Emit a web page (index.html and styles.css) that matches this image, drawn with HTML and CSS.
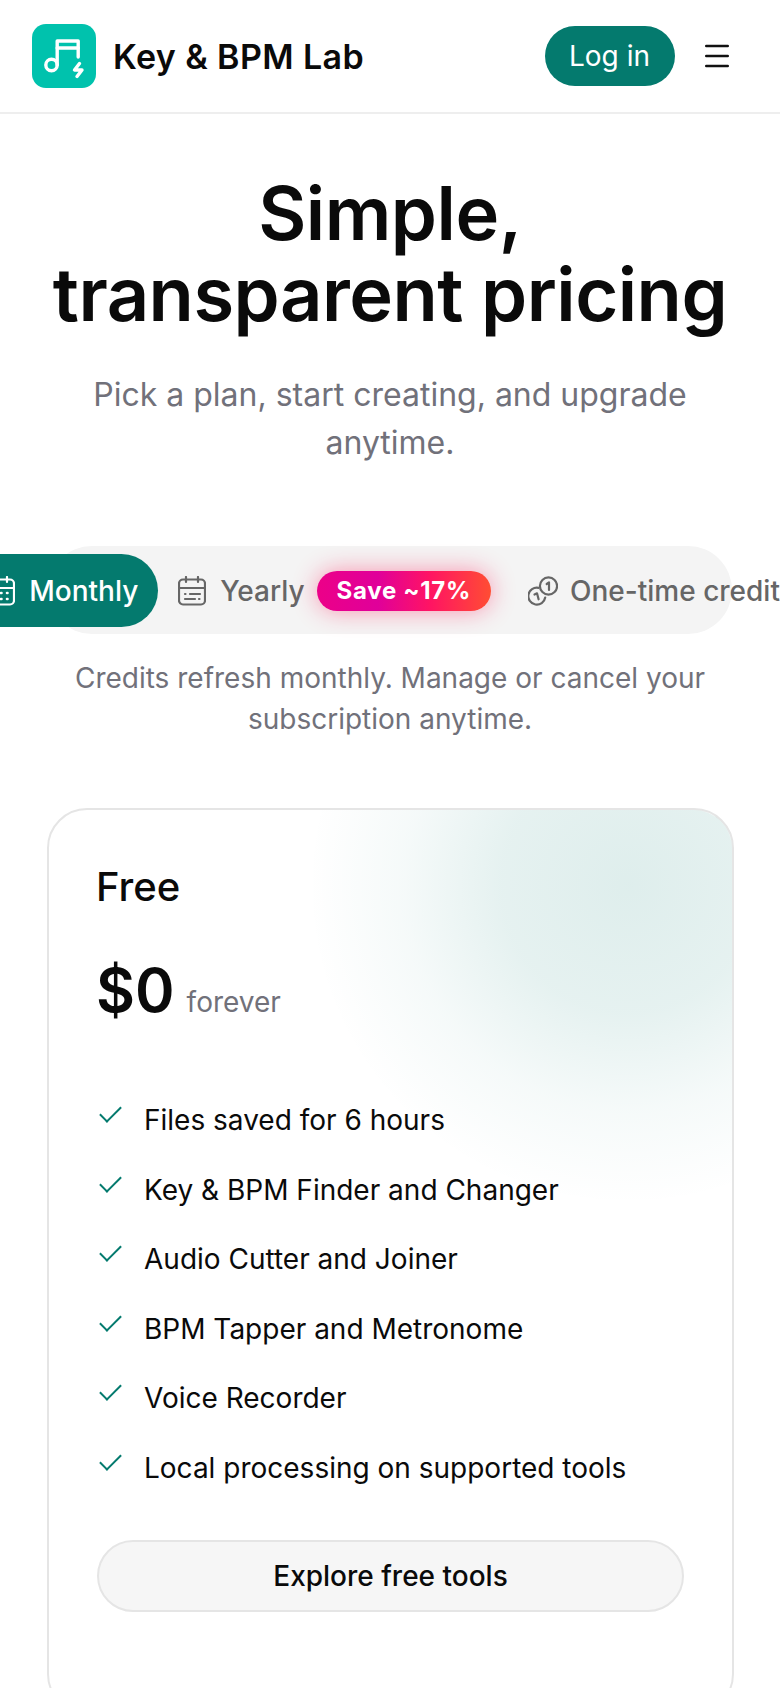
FILE: index.html
```html
<!DOCTYPE html>
<html lang="en">
<head>
    <meta charset="UTF-8">
    <meta name="viewport" content="width=device-width, initial-scale=1.0">
    <title>Pricing - Key &amp; BPM Lab</title>
    <link rel="stylesheet" href="styles.css">
</head>
<body>
    <header class="topbar">
        <a class="brand" href="#">
            <span class="brand-logo">
                <svg viewBox="0 0 64 64" width="64" height="64" fill="none" stroke="#fff" stroke-width="3.4" stroke-linecap="round" stroke-linejoin="round">
                    <circle cx="19.5" cy="41" r="5.7"/>
                    <path d="M25.2 41V17h21v16"/>
                    <path d="M25.2 24h21"/>
                    <path d="M47.5 39.5l-5 6.5h7.5l-5 6.5"/>
                </svg>
            </span>
            <span class="brand-name">Key &amp; BPM Lab</span>
        </a>
        <div class="topbar-right">
            <a class="login" href="#">Log in</a>
            <button class="menu" aria-label="Menu">
                <svg viewBox="0 0 24 24" width="24" height="24" fill="none" stroke="#111" stroke-width="2.4" stroke-linecap="round">
                    <path d="M1.2 2h21.6M1.2 12h21.6M1.2 22h21.6"/>
                </svg>
            </button>
        </div>
    </header>

    <main class="page">
        <section class="hero">
            <h1>Simple,<br>transparent pricing</h1>
            <p>Pick a plan, start creating, and upgrade anytime.</p>
        </section>

        <div class="tabs">
            <button class="tab active">
                <svg class="tab-icon" viewBox="0 0 28 30" fill="none" stroke="currentColor" stroke-width="2.2" stroke-linecap="round">
                    <rect x="1" y="3.5" width="26" height="25" rx="4"/>
                    <path d="M1 12h26M8 1v5M20 1v5"/>
                    <path d="M8 17h.5M14 17h.5M20 17h.5M8 23h.5M14 23h.5M20 23h.5" stroke-width="2.6"/>
                </svg>
                Monthly
            </button>
            <button class="tab">
                <svg class="tab-icon" viewBox="0 0 28 30" fill="none" stroke="currentColor" stroke-width="2.2" stroke-linecap="round">
                    <rect x="1" y="3.5" width="26" height="25" rx="4"/>
                    <path d="M1 12h26M8 1v5M20 1v5"/>
                    <path d="M7 18h.5M12 18h10M7 23h10M21 23h.5"/>
                </svg>
                Yearly
                <span class="save">Save ~17%</span>
            </button>
            <button class="tab tab-credits">
                <svg class="tab-icon coins" viewBox="0 0 30 30" fill="none" stroke="currentColor" stroke-width="2.2" stroke-linecap="round" stroke-linejoin="round">
                    <circle cx="20.5" cy="10" r="8.6"/>
                    <path d="M18.7 8l2.3-1.6V14"/>
                    <path d="M10.5 11.8A8.5 8.5 0 1 0 17.2 21.5"/>
                    <path d="M6.5 18.5l2.5-1.2 1.6 6"/>
                </svg>
                One-time credits
            </button>
        </div>
        <p class="tabs-note">Credits refresh monthly. Manage or cancel your subscription anytime.</p>

        <section class="card">
            <div class="card-glow"></div>
            <h2>Free</h2>
            <div class="price"><strong>$0</strong> <span>forever</span></div>
            <ul class="features">
                <li>Files saved for 6 hours</li>
                <li>Key &amp; BPM Finder and Changer</li>
                <li>Audio Cutter and Joiner</li>
                <li>BPM Tapper and Metronome</li>
                <li>Voice Recorder</li>
                <li>Local processing on supported tools</li>
            </ul>
            <a class="card-btn" href="#">Explore free tools</a>
        </section>
    </main>
</body>
</html>
```

FILE: styles.css
```css
* {
    box-sizing: border-box;
}
html, body {
    overflow-x: hidden;
}
body {
    margin: 0;
    font-family: Inter, "Liberation Sans", sans-serif;
    background-color: #fff;
    color: #0a0a0a;
}
a {
    color: inherit;
    text-decoration: none;
}
button {
    font-family: inherit;
    border: 0;
    background: none;
    padding: 0;
}

/* top bar */
.topbar {
    display: flex;
    justify-content: space-between;
    align-items: center;
    height: 114px;
    padding: 0 51px 0 32px;
    border-bottom: 2px solid #eeeeee;
}
.brand {
    display: flex;
    align-items: center;
    gap: 17px;
}
.brand-logo {
    display: block;
    width: 64px;
    height: 64px;
    background-color: #00c2ad;
    border-radius: 14px;
}
.brand-logo svg {
    display: block;
}
.brand-name {
    font-size: 34px;
    font-weight: 600;
    letter-spacing: 0.4px;
}
.topbar-right {
    display: flex;
    align-items: center;
    gap: 30px;
}
.login {
    display: flex;
    align-items: center;
    height: 60px;
    padding: 0 25px 0 24px;
    border-radius: 30px;
    background-color: #047a6e;
    color: #fff;
    font-size: 28px;
}
.menu {
    display: block;
    height: 24px;
}

/* hero */
.page {
    padding: 59px 48px 0;
}
.hero {
    text-align: center;
}
.hero h1 {
    margin: 0 -20px;
    font-size: 74px;
    line-height: 81px;
    font-weight: 600;
    letter-spacing: -0.5px;
}
.hero p {
    margin: 36px 0 0;
    padding: 0 30px;
    font-size: 32px;
    line-height: 48px;
    color: #71717a;
}

/* plan tabs */
.tabs {
    display: flex;
    justify-content: center;
    align-items: center;
    height: 88px;
    margin-top: 79px;
    padding: 9px 8px 8px;
    border-radius: 44px;
    background-color: #f4f4f4;
}
.tab {
    display: flex;
    flex-shrink: 0;
    align-items: center;
    gap: 14px;
    height: 73px;
    padding: 0 20px;
    border-radius: 37px;
    font-size: 28px;
    font-weight: 500;
    color: #666;
    white-space: nowrap;
}
.tab.active {
    padding-left: 22px;
    background-color: #047a6e;
    color: #fff;
}
.tab-credits {
    padding-left: 17px;
    gap: 12px;
}
.tab-icon {
    width: 28px;
    height: 30px;
}
.tab-icon.coins {
    width: 30px;
}
.save {
    display: block;
    margin-left: -2px;
    padding: 0 20px;
    height: 40px;
    line-height: 40px;
    border-radius: 20px;
    font-size: 24px;
    font-weight: 700;
    letter-spacing: 0.7px;
    color: #fff;
    background-image: linear-gradient(90deg, #ec0088 0%, #e0009a 35%, #ff1463 65%, #ff4d33 100%);
    box-shadow: 0 0 24px rgba(255, 30, 90, 0.45);
}
.tabs-note {
    margin: 24px 0 0;
    text-align: center;
    font-size: 28px;
    line-height: 41px;
    color: #71717a;
}

/* plan card */
.card {
    position: relative;
    overflow: hidden;
    margin: 68px -2px 0 -1px;
    padding: 53px 48px 100px;
    border: 2px solid #e5e5e5;
    border-radius: 40px;
    background-color: #fff;
}
.card-glow {
    position: absolute;
    top: -245px;
    right: -216px;
    width: 640px;
    height: 640px;
    background-image: radial-gradient(circle closest-side, rgba(4, 122, 110, 0.13) 0%, rgba(4, 122, 110, 0.1) 40%, rgba(4, 122, 110, 0.04) 70%, rgba(4, 122, 110, 0) 100%);
}
.card h2 {
    position: relative;
    margin: 0 0 0 -1px;
    font-size: 40px;
    line-height: 48px;
    font-weight: 500;
}
.price {
    position: relative;
    margin: 39px 0 0 -1px;
    display: flex;
    align-items: baseline;
    gap: 12px;
}
.price strong {
    font-size: 60px;
    line-height: 80px;
    font-weight: 600;
}
.price span {
    font-size: 28px;
    color: #71717a;
}
.features {
    position: relative;
    list-style: none;
    margin: 56px 0 0;
    padding: 0;
}
.features li {
    position: relative;
    height: 69.6px;
    padding-left: 47px;
    font-size: 28px;
    line-height: 69.6px;
}
.features li::before {
    content: "";
    position: absolute;
    left: 3px;
    top: 20px;
    width: 19px;
    height: 9px;
    border-left: 2px solid #047a6e;
    border-bottom: 2px solid #047a6e;
    transform: rotate(-45deg);
}
.card-btn {
    position: relative;
    display: flex;
    justify-content: center;
    align-items: center;
    height: 72px;
    margin-top: 36px;
    border: 2px solid #e5e5e5;
    border-radius: 36px;
    background-color: #f6f6f6;
    font-size: 28px;
    font-weight: 500;
}
```
